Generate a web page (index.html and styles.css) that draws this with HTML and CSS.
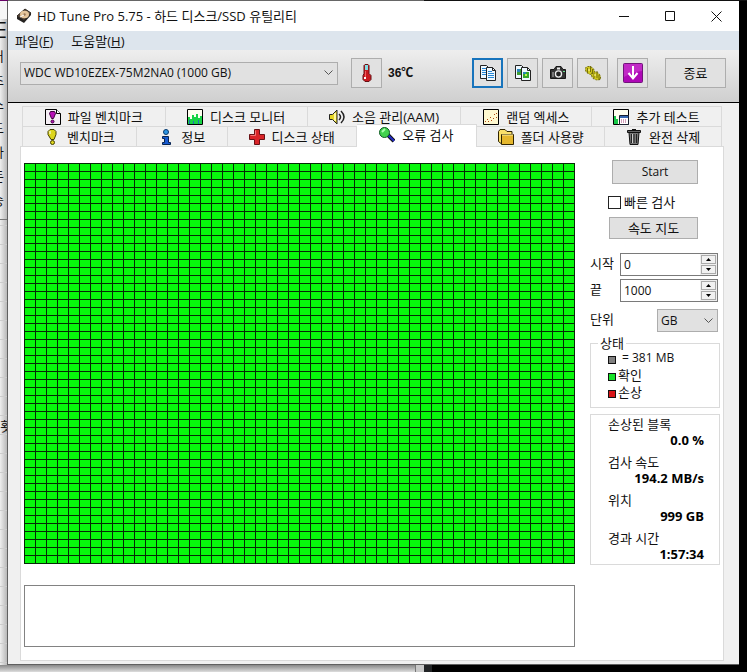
FILE: index.html
```html
<!DOCTYPE html>
<html lang="ko">
<head>
<meta charset="utf-8">
<title>HD Tune Pro 5.75</title>
<link rel="stylesheet" href="styles.css">
</head>
<body>
<div class="desktop">
  <div class="top-edge"></div>
  <div class="left-edge" aria-hidden="true">
    <div class="doc-heading">DE</div>
    <div class="doc-text"><span>어</span><span>초</span><span>스</span><span>드</span><span>가</span><span>든</span><span>송</span></div>
    <div class="doc-rows"><span>횟</span></div>
  </div>
  <main class="window">
    <header class="titlebar">
      <svg class="app-icon" viewBox="0 0 16 16"><path d="M1 8 9 1l6 4-7 8z" fill="#5b4a3c" stroke="#302820"/><path d="M1 8v3l7 4v-3zM8 12v3l7-8V5z" fill="#252220"/><ellipse cx="8.500" cy="6.500" rx="4.500" ry="3.700" fill="#e5c59b"/><circle cx="8.500" cy="6.500" r="1.200" fill="#9a7858"/><path d="m4 9 4-2" stroke="#fff"/></svg>
      <h1>HD Tune Pro 5.75 - 하드 디스크/SSD 유틸리티</h1>
      <div class="window-controls">
        <button aria-label="최소화"><svg viewBox="0 0 11 11"><path d="M0 5.500h10"/></svg></button>
        <button aria-label="최대화"><svg viewBox="0 0 11 11"><path d="M.5.5h9v9h-9z"/></svg></button>
        <button aria-label="닫기"><svg viewBox="0 0 11 11"><path d="m.5.5 10 10m0-10-10 10"/></svg></button>
      </div>
    </header>
    <nav class="menubar"><button>파일(<u>F</u>)</button><button>도움말(<u>H</u>)</button></nav>
    <div class="toolbar">
      <select class="drive" aria-label="드라이브"><option>WDC WD10EZEX-75M2NA0 (1000 GB)</option></select>
      <button class="tool temp-button" aria-label="온도"><svg viewBox="0 0 20 20"><path d="M8 1.500h3l1 1v8l2 2v4l-2 2H8l-2-2v-4l1-2v-8z" fill="#c91a20" stroke="#641014"/><path d="M8 2h3v5H8z" fill="#84dce4"/><path d="M8.500 8v7" stroke="#f06060"/><path d="M7 14h2v2H7z" fill="#fff"/></svg></button>
      <output class="temp">36℃</output>
      <div class="tool-group">
        <button class="tool focused" aria-label="텍스트 복사"><svg viewBox="0 0 20 20"><path d="M2.500 2.500h6l2 2v11h-8z" fill="#eef8ff" stroke="#222"/><path d="M4 5.500h5M4 7.500h5M4 9.500h5M4 11.500h5" stroke="#2787d4"/><path d="M8.500 4.500h6l3 3v10h-9z" fill="#eef8ff" stroke="#222"/><path d="M14.500 4.500v3h3" fill="none" stroke="#222"/><path d="M10 8.500h4M10 10.500h6M10 12.500h6M10 14.500h6" stroke="#2787d4"/></svg></button>
        <button class="tool" aria-label="화면 복사"><svg viewBox="0 0 20 20"><path d="M2.500 2.500h6l2 2v11h-8z" fill="#eef8ff" stroke="#222"/><path d="M4 6h5v6H4z" fill="#3e9e34"/><path d="M4 6h3v3H4z" fill="#2c86b9"/><path d="M8.500 4.500h6l3 3v10h-9z" fill="#eef8ff" stroke="#222"/><path d="M14.500 4.500v3h3" fill="none" stroke="#222"/><path d="M10 9h6v6h-6z" fill="#35a62b"/><path d="M10 9h3v2h-3z" fill="#2889b5"/><path d="M12 11h2v2h-2z" fill="#bbf24c"/></svg></button>
        <button class="tool" aria-label="화면 저장"><svg viewBox="0 0 20 20"><path d="M3 6.500h3l2-3h5l2 3h2.500v9h-15v-9z" fill="#343434" stroke="#171717"/><path d="M9 4.500h3v2H9z" fill="#eee"/><circle cx="10.500" cy="11" r="3.700" fill="#eee"/><circle cx="10.500" cy="11" r="2.400" fill="#222"/><path d="M4 9h2v5H4z" fill="#777"/><path d="M15 8h2v1h-2z" fill="#6dde8f"/></svg></button>
        <button class="tool" aria-label="옵션"><svg viewBox="0 0 20 20"><g fill="#cfc81c" stroke="#77700e" stroke-dasharray="2 1"><ellipse cx="7" cy="7.500" rx="5" ry="3.500" transform="rotate(35 7 7.500)"/><ellipse cx="13" cy="13" rx="5" ry="3.500" transform="rotate(35 13 13)"/></g><path d="M4.500 5v5M7.500 3v6m2-3v5M11 10v5m3-7v7m2-3v5" stroke="#77700b"/><path d="M6 6v2m6 3v2" stroke="#fff9a0"/></svg></button>
        <button class="tool save" aria-label="저장"><svg viewBox="0 0 20 20"><rect x=".5" y=".5" width="19" height="19" rx="1" fill="#ae08b6" stroke="#70147a"/><path d="M1 1h18v7Q10 9 1 14z" fill="#d34ad6" opacity=".5"/><path d="M10 3v11M5.500 10 10 15.500l4.500-5.500" fill="none" stroke="#fff" stroke-width="2"/></svg></button>
        <button class="exit">종료</button>
      </div>
    </div>
    <nav class="tabs">
      <div class="tab-row first">
        <button><svg viewBox="0 0 16 16"><path d="M.5.5h11l4 4v11H.5z" fill="#f4eef4" stroke="#000"/><path d="M11.500.5v4h4" fill="#fff" stroke="#000"/><path d="M5.500 2.500h4l1 2-2 5h-2l-2-5z" fill="#b610b6" stroke="#400040"/><circle cx="7.500" cy="12.500" r="1.500" fill="#b610b6" stroke="#400040"/></svg>파일 벤치마크</button>
        <button><svg viewBox="0 0 16 16"><path d="M.5.5h15v15H.5z" fill="#fffff0" stroke="#000"/><path d="M1 15V8h2v2h2V6h2v2h2V5h2v4h2V7h2v8z" fill="#19d445"/><path d="M2 15v-4h1v4zm4 0v-3h1v3zm5 0v-4h1v4z" fill="#246cba"/></svg>디스크 모니터</button>
        <button><svg viewBox="0 0 16 16"><path d="M.5 5.500h3l4.500-4.500v14L3.500 10.500h-3z" fill="#e5d624" stroke="#222"/><path d="M6 4v8" stroke="#fff89b" stroke-width="2"/><path d="M10 5q3 3 0 6m2-9q6 6 0 12" fill="none" stroke="#222" stroke-width="1.500"/></svg>소음 관리(AAM)</button>
        <button><svg viewBox="0 0 16 16"><path d="M.5.5h15v15H.5z" fill="#fff9d0" stroke="#000"/><path d="M2 12h1v1H2zm2-2h1v1H4zm1 2h1v1H5zm2-4h1v1H7zm1 3h1v1H8zm2-2h1v1h-1zm1-4h1v1h-1zm2 3h1v1h-1zm0-4h1v1h-1z" fill="#b04a16"/></svg>랜덤 엑세스</button>
        <button><svg viewBox="0 0 16 16"><path d="M.5.5h15v15H.5z" fill="#fffff0" stroke="#000"/><path d="M1 15V7h2v3h2v5z" fill="#17c848"/><path d="M6.500 6.500h9v9h-9z" fill="#fff" stroke="#182030"/><path d="M7 7h8v2H7z" fill="#3567b0"/><path d="M8 11h1m1 0h1m1 0h1M8 13h1m1 0h1m1 0h1" stroke="#a43a72"/></svg>추가 테스트</button>
      </div>
      <div class="tab-row second">
        <button><svg viewBox="0 0 16 16"><path d="M6 .5h4l2 2v3l-2 5H7l-3-5v-3z" fill="#ddd51c" stroke="#444000"/><path d="M6 2v3" stroke="#fff"/><circle cx="8.500" cy="13.500" r="2" fill="#ddd51c" stroke="#444000"/></svg>벤치마크</button>
        <button><svg viewBox="0 0 16 16"><circle cx="8" cy="3" r="2.500" fill="#2c95e4" stroke="#07396c"/><path d="M4.500 7.500h6v6h2v2h-8v-2h2v-4h-2z" fill="#175ad0" stroke="#062350"/></svg>정보</button>
        <button><svg viewBox="0 0 16 16"><path d="M5.500.5h5v5h5v5h-5v5h-5v-5h-5v-5h5z" fill="#d92428" stroke="#681014"/><path d="M6.500 1.500v5h-5" fill="none" stroke="#f37875"/></svg>디스크 상태</button>
        <button class="active" aria-current="page"><svg viewBox="0 0 16 16"><path d="m9 8 6 6" stroke="#111" stroke-width="4"/><path d="m9 8 6 6" stroke="#222bc4" stroke-width="2"/><circle cx="5.500" cy="5.500" r="5" fill="#42d24d" stroke="#0c5920"/><path d="m3 5 3-3" stroke="#a8ffac" stroke-width="2"/></svg>오류 검사</button>
        <button><svg viewBox="0 0 16 16"><path d="M.5 2.500 2 .5h5l2 2h5v12H3l-2.500-2z" fill="#f9df6a" stroke="#302400"/><path d="M3.500 5.500h12v10h-12z" fill="#e5b72d" stroke="#302400"/><path d="M4 6h11" stroke="#fff0a0"/></svg>폴더 사용량</button>
        <button><svg viewBox="0 0 16 16"><path d="M3 3.500h10l-1 12H4z" fill="#777" stroke="#111"/><path d="M1.500 1.500h13v2h-13zM6 .5h4" fill="#666" stroke="#111"/><path d="M5.500 5v9M8 5v9m2.500-9v9" stroke="#222"/><path d="M6.500 5v9" stroke="#ccc"/></svg>완전 삭제</button>
      </div>
    </nav>
    <section class="panel">
      <div class="results">
        <div class="block-map" role="img" aria-label="모든 블록 확인"></div>
        <div class="log"></div>
      </div>
      <aside class="side">
        <button class="push start">Start</button>
        <label class="quick"><input type="checkbox">빠른 검사</label>
        <button class="push map-button">속도 지도</button>
        <div class="field">
          <label for="from">시작</label>
          <div class="spin"><input id="from" value="0"><div class="steps"><button aria-label="시작 증가"><svg viewBox="0 0 5 3"><path d="M0 3h5L2.500 0z"/></svg></button><button aria-label="시작 감소"><svg viewBox="0 0 5 3"><path d="M0 0h5L2.500 3z"/></svg></button></div></div>
        </div>
        <div class="field">
          <label for="to">끝</label>
          <div class="spin"><input id="to" value="1000"><div class="steps"><button aria-label="끝 증가"><svg viewBox="0 0 5 3"><path d="M0 3h5L2.500 0z"/></svg></button><button aria-label="끝 감소"><svg viewBox="0 0 5 3"><path d="M0 0h5L2.500 3z"/></svg></button></div></div>
        </div>
        <div class="field unit"><label for="unit">단위</label><select id="unit"><option>GB</option></select></div>
        <fieldset class="legend">
          <legend>상태</legend>
          <ul><li><i class="gray"></i><span class="size">= 381 MB</span></li><li><i class="green"></i>확인</li><li><i class="red"></i>손상</li></ul>
        </fieldset>
        <dl class="stats">
          <dt>손상된 블록</dt><dd>0.0 %</dd>
          <dt>검사 속도</dt><dd>194.2 MB/s</dd>
          <dt>위치</dt><dd>999 GB</dd>
          <dt>경과 시간</dt><dd>1:57:34</dd>
        </dl>
      </aside>
    </section>
  </main>
  <div class="right-edge"></div>
  <div class="bottom-edge"><span class="doc-end"></span><span class="doc-scroll"></span><span class="doc-frame"></span></div>
</div>
</body>
</html>
```

FILE: styles.css
```css
* { box-sizing: border-box; }
body { margin: 0; background: #000; color: #111; font: 13px/16px "Open Sans", "Noto Sans CJK KR", sans-serif; }
button, input, select { font: inherit; color: inherit; margin: 0; padding: 0; border-radius: 0; }
button { background: none; border: 0; }
svg { display: block; flex: none; }

.desktop { display: grid; grid-template-columns: 7px minmax(0, 1fr) 8px; grid-template-rows: 1px 1fr 7px; min-height: 100vh; }
.top-edge { grid-column: 1 / -1; background: linear-gradient(90deg, #606 0 8px, #666 8px 424px, #111 424px); }
.left-edge { overflow: hidden; background: linear-gradient(90deg, #eee, #b8b8b8); }
.doc-heading { display: flex; justify-content: flex-end; height: 45px; border-top: 18px solid #f6f6f6; font-size: 22px; line-height: 20px; }
.doc-text { display: flex; flex-direction: column; align-items: flex-end; height: 174px; padding-right: 3px; border-bottom: 1px solid #777; }
.doc-text span { height: 24px; line-height: 20px; }
.doc-rows { display: flex; align-items: flex-start; height: 445px; padding-top: 198px; background: repeating-linear-gradient(transparent 0 5px, #ccc 5px 6px, transparent 6px 19px); }
.right-edge { background: #000; }
.bottom-edge { grid-column: 1 / -1; display: flex; background: #000; }
.doc-end { flex: 0 0 416px; background: linear-gradient(#888, #ddd); border-right: 1px solid #777; }
.doc-scroll { flex: 0 0 8px; background: #c8c8c8; }
.doc-frame { flex: 0 0 8px; background: #222426; }

.window { display: flex; flex-direction: column; background: #f0f0f0; border: solid #606060; border-width: 0 0 1px 1px; }
.titlebar { display: flex; align-items: center; height: 30px; padding-left: 8px; background: #fff; }
.app-icon { width: 16px; height: 16px; }
h1 { margin: 0 0 0 5px; font-size: 13px; font-weight: 400; white-space: nowrap; }
.window-controls { display: flex; margin-left: auto; }
.window-controls button { display: grid; place-items: center; width: 46px; height: 29px; }
.window-controls svg { width: 11px; height: 11px; fill: none; stroke: #111; }
.menubar { display: flex; gap: 18px; height: 19px; padding-left: 7px; background: #dde5ed; }
.toolbar { display: flex; align-items: center; height: 53px; padding: 0 13px 6px 12px; background: linear-gradient(#eee, #cfcfcf); border-bottom: 1px solid #000; }
select { appearance: none; border: 1px solid #adadad; background: #e1e1e1 url("data:image/svg+xml,%3Csvg xmlns='http://www.w3.org/2000/svg' width='9' height='6'%3E%3Cpath d='m.5.5 4 4 4-4' fill='none' stroke='%23555'/%3E%3C/svg%3E") no-repeat right 4px center; font-size: 12px; }
.drive { flex: 0 1 318px; min-width: 0; height: 23px; padding-left: 3px; }
.tool, .exit, .push { background: #e1e1e1; border: 1px solid #adadad; }
.tool { display: grid; place-items: center; flex: none; width: 31px; height: 30px; }
.tool svg { width: 20px; height: 20px; }
.temp-button { margin-left: 13px; }
.temp { margin-left: 6px; font: bold 12px/16px "Liberation Sans", "Noto Sans CJK KR", sans-serif; }
.tool-group { display: flex; gap: 4px; margin-left: auto; }
.tool.focused { border: 2px solid #1874bc; }
.save { margin-left: 5px; }
.exit { width: 61px; height: 30px; margin-left: 13px; }

.tabs { padding: 3px 17px 0 14px; }
.tab-row { display: grid; height: 20px; border: solid #dadada; border-width: 1px 1px 0; }
.first { grid-template-columns: 143fr 142fr 154fr 131fr 129fr; }
.second { grid-template-columns: 114fr 91fr 129fr 121fr 128fr 116fr; }
.tab-row button { display: flex; align-items: center; justify-content: center; gap: 7px; min-width: 0; height: 19px; border-right: 1px solid #dadada; white-space: nowrap; }
.tab-row button:last-child { border-right: 0; }
.tab-row svg { width: 16px; height: 16px; }
.tab-row .active { height: 23px; margin-top: -3px; padding-bottom: 3px; background: #fff; border-top: 1px solid #dadada; z-index: 1; }

.panel { display: grid; grid-template-columns: minmax(0, 1fr) 130px; gap: 15px; flex: 1; margin: 0 15px 3px 12px; padding: 13px 3px 13px; background: #fff; border: 1px solid #dadada; }
.results { padding-top: 3px; }
.block-map { height: 401px; background: linear-gradient(#052b05, #052b05) right / 1px 100% no-repeat, linear-gradient(#052b05, #052b05) bottom / 100% 1px no-repeat, linear-gradient(90deg, #052b05 1px, transparent 1px) 0 0 / 11px 8px, linear-gradient(#052b05 1px, #08f80c 1px) 0 0 / 11px 8px; }
.log { height: 62px; margin-top: 21px; border: 1px solid #828282; }
.side { display: flex; flex-direction: column; align-items: flex-end; padding-right: 2px; }
.start { width: 86px; height: 24px; margin-right: 20px; font-size: 12px; }
.quick { display: flex; align-items: center; gap: 3px; width: 110px; margin: 10px 0 7px; }
.quick input { appearance: none; width: 13px; height: 13px; border: 1px solid #222; background: #fff; }
.map-button { width: 89px; height: 22px; margin: 0 20px 14px 0; }
.field { display: flex; justify-content: space-between; width: 128px; margin-bottom: 3px; line-height: 20px; }
.spin { display: flex; width: 98px; height: 23px; border: 1px solid #7a7a7a; }
.spin input { flex: 1; min-width: 0; padding-left: 3px; border: 0; background: #fff; font-size: 12px; }
.steps { display: flex; flex-direction: column; gap: 1px; width: 17px; padding: 1px; background: #eee; }
.steps button { display: grid; place-items: center; flex: 1; border: 1px solid #aaa; background: #f1f1f1; }
.steps svg { width: 5px; height: 3px; }
.unit { margin: 4px 0 3px; }
.unit select { width: 61px; height: 23px; padding-left: 3px; }
.legend { width: 130px; height: 73px; margin: 0 -2px 6px 0; padding: 0 0 0 17px; border: 1px solid #dadada; }
legend { margin-left: -10px; padding: 0 2px; }
.legend ul { margin: -2px 0 0; padding: 0; list-style: none; }
.legend li { display: flex; align-items: center; gap: 2px; height: 17px; }
.legend i { width: 8px; height: 8px; margin-top: 4px; border: 1px solid #111; }
.size { margin-left: 4px; font-size: 12px; }
.gray { background: #808080; }
.green { background: #18e428; }
.red { background: #d81418; }
.stats { width: 130px; height: 151px; margin: 0 -2px 0 0; padding: 1px 15px 0 17px; border: 1px solid #dadada; }
.stats dt { height: 16px; }
.stats dd { height: 22px; margin: 0; text-align: right; font-weight: 700; color: #000; }
```
